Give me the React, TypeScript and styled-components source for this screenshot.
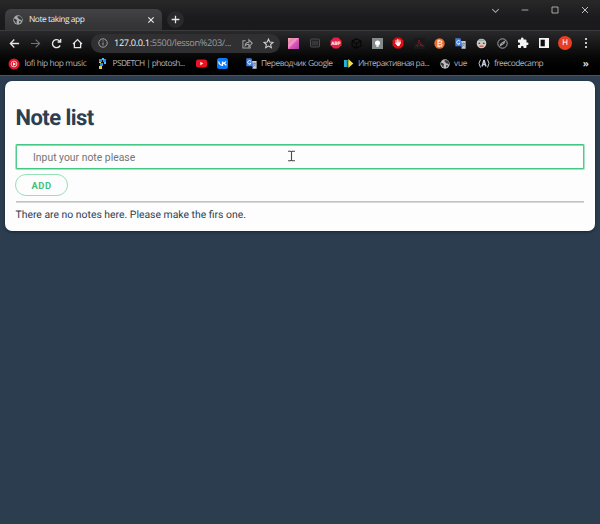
import React from 'react';
import styled, { createGlobalStyle } from 'styled-components';

const Global = createGlobalStyle`
  * { box-sizing: border-box; }
  body { margin: 0; background: #2b3d4f; overflow: hidden; font-family: Roboto, sans-serif; text-rendering: geometricPrecision; }
  svg { display: block; flex: none; }
`;

const Window = styled.div`
  width: 600px;
  height: 524px;
  display: flex;
  flex-direction: column;
  background: #2b3d4f;
`;
const TitleBar = styled.header`
  height: 30px;
  flex: none;
  display: flex;
  align-items: flex-end;
  padding-left: 5px;
  background: linear-gradient(#292829, #1b1a1c 60%, #1a191b);
`;
const Tab = styled.div`
  width: 157px;
  height: 21px;
  display: flex;
  align-items: center;
  padding: 0 7px 0 8px;
  border-radius: 6px 6px 0 0;
  background: linear-gradient(#424244, #323233);
`;
const TabTitle = styled.span`
  flex: 1;
  margin-left: 6px;
  font: 8.4px/12px 'Open Sans', sans-serif;
  color: #ececec;
  letter-spacing: -0.45px;
  white-space: nowrap;
`;
const NewTab = styled.div`
  width: 17px;
  height: 17px;
  margin: 0 0 2px 5px;
  display: grid;
  place-items: center;
  border-radius: 50%;
  background: #29282a;
`;
const WindowButtons = styled.div`
  display: grid;
  grid-template-columns: repeat(4, 30px);
  place-items: center;
  height: 20px;
  margin: 0 0 10px auto;
`;
const Toolbar = styled.div`
  height: 25px;
  flex: none;
  display: flex;
  align-items: center;
  padding-left: 3.5px;
  border-top: 1px solid #3b3a3c;
  background: linear-gradient(#29292b, #090909);
`;
const NavButtons = styled.nav`
  flex: none;
  display: grid;
  grid-template-columns: repeat(4, 21px);
  place-items: center;
  margin-right: 3.5px;
`;
const AddressBar = styled.div`
  flex: none;
  width: 188.5px;
  height: 19px;
  display: flex;
  align-items: center;
  gap: 10px;
  padding: 0 6px 0 7px;
  border-radius: 10px;
  background: #303032;
`;
const Url = styled.span`
  flex: 1;
  min-width: 0;
  margin: -1px 0 0 -4px;
  font: 9.2px/13px 'Open Sans', sans-serif;
  color: #9b9b9d;
  letter-spacing: -0.34px;
  white-space: nowrap;
  b { font-weight: 400; color: #f2f2f2; }
`;
const Actions = styled.div`
  flex: none;
  display: grid;
  grid-template-columns: repeat(15, 20.86px);
  place-items: center;
  margin-left: 4px;
`;
const Avatar = styled.div`
  width: 14px;
  height: 14px;
  border-radius: 50%;
  background: #e8401f;
  color: #fff;
  font: 8px/14px Roboto, sans-serif;
  text-align: center;
`;
const Bookmarks = styled.div`
  height: 20px;
  flex: none;
  display: flex;
  align-items: center;
  padding: 0 11px 3px 8px;
  background: linear-gradient(#080808, #000 60%);
`;
const Bookmark = styled.div<{ $width: number; $tracking?: number }>`
  flex: none;
  width: ${(p) => p.$width}px;
  display: flex;
  align-items: center;
  gap: 4.5px;
  font: 8.4px/12px 'Open Sans', sans-serif;
  letter-spacing: ${(p) => p.$tracking ?? -0.48}px;
  color: #b0b2b8;
  white-space: nowrap;
`;
const More = styled.span`
  margin-left: auto;
  font: 700 10px/10px 'Open Sans', sans-serif;
  padding-bottom: 2px;
  color: #ddd;
`;
const Page = styled.main`
  flex: 1;
  padding: 6px 5px 0;
  box-shadow: inset 0 1px #40566b;
`;
const Card = styled.section`
  height: 150px;
  padding: 24px 11px 0 10px;
  border-radius: 7px;
  background: #fdfdfe;
  color: #2c3e50;
  box-shadow: 0 1px 3px rgba(10, 20, 35, 0.6);
`;
const Heading = styled.h1`
  margin: 0 0 0 0.5px;
  font-size: 22px;
  line-height: 27px;
  font-weight: 700;
  letter-spacing: -0.55px;
`;
const NoteInput = styled.input`
  display: block;
  width: 100%;
  height: 26px;
  margin: 12px 0 4px;
  padding: 0 15px 0 17px;
  width: 570px;
  border: 1px solid #a4e4c3;
  border-top-color: #42c883;
  border-radius: 2px;
  outline: none;
  background: transparent;
  box-shadow: inset 1px 0 #52cb8e, inset -1px 0 #52cb8e, inset 0 -1px #42c883, inset 0 1px #8edcb4;
  font: 10.4px Roboto, sans-serif;
  &::placeholder { color: #757575; opacity: 1; }
`;
const AddButton = styled.button`
  display: block;
  width: 53px;
  height: 22px;
  padding: 0;
  border: 1px solid #96dfb9;
  border-radius: 11px;
  background: transparent;
  color: #42bf80;
  font: 700 9.4px Roboto, sans-serif;
  letter-spacing: 0.5px;
`;
const Divider = styled.hr`
  height: 2px;
  margin: 5px 0 5px 0.5px;
  border: 0;
  border-top: 1px solid #c0c2c3;
  background: #d6d7d8;
`;
const Message = styled.p`
  margin: 0 0 0 0.5px;
  font-size: 10.4px;
  line-height: 13px;
  white-space: nowrap;
`;
const Pointer = styled.svg`
  position: absolute;
  left: 287px;
  top: 150px;
`;

const Line = ({ d, size = 12, color = '#e6e6e6', w = 1.3 }: { d: string; size?: number; color?: string; w?: number }) => (
  <svg width={size} height={size} viewBox="0 0 12 12" fill="none" stroke={color} strokeWidth={w}><path d={d} /></svg>
);
const Globe = ({ size = 10, color = '#bcbec0' }: { size?: number; color?: string }) => (
  <svg width={size} height={size} viewBox="0 0 10 10">
    <circle cx="5" cy="5" r="4.7" fill={color} />
    <path d="M1 3.6l2 .7 1.2 1.1-.7 1.2.4 2.2-1.4-1L1 5.3zM5 1l-.8 1.3 1.2.7.3 1.2 1.7.2 1.5 1.4.2-2.4L7.7 1.6zM6.1 6l1.9.3-.8 1.6-1.1.5z" fill="#38393b" />
  </svg>
);
const Translate = () => (
  <svg width="11" height="11" viewBox="0 0 11 11">
    <path d="M5 3h5.6v7.7H6.5z" fill="#c9ced6" />
    <path d="M.3.3h5.2l2 8H.3z" fill="#3f7fe2" />
    <path d="M5 3.3a1.8 1.8 0 1 0 .1 2H3.6" fill="none" stroke="#fff" strokeWidth=".9" />
    <path d="M6.9 5.4h3.2M8.5 4.5v1M9.7 5.6Q9 7.5 7.4 8.1M7.4 6.3l2.3 2.2" fill="none" stroke="#64788f" strokeWidth=".7" />
    <path d="M5.5 8.3h2l-1 2.4z" fill="#2855ac" />
  </svg>
);

const Extensions = () => (
  <Actions>
    <svg width="11" height="11" viewBox="0 0 11 11">
      <defs><linearGradient id="pink" x1="0" y1="0" x2="1" y2="1"><stop stopColor="#f2b5a9" /><stop offset=".5" stopColor="#e45bb5" /><stop offset="1" stopColor="#a63fac" /></linearGradient></defs>
      <path d="M0 0h11v11H0z" fill="url(#pink)" /><path d="M0 7L7 0h4L0 11z" fill="#f4b1dc" opacity=".55" />
    </svg>
    <svg width="10" height="10" viewBox="0 0 10 10" fill="#242426" stroke="#4b4b4d"><rect x=".5" y="1" width="9" height="8" rx="1" /><path d="M3 3v4M5 3v4M7 3v4" /></svg>
    <svg width="12" height="12" viewBox="0 0 12 12"><path d="M3.7.5h4.6l3.2 3.2v4.6l-3.2 3.2H3.7L.5 8.3V3.7z" fill="#e51f45" /><text x="6" y="7.8" fill="#fff" fontFamily="Roboto" fontWeight="700" fontSize="4.8" textAnchor="middle">ABP</text></svg>
    <Line size={11} color="#050505" w={1.2} d="M6 .8l4.8 2.6v5.2L6 11.2 1.2 8.6V3.4zM1.2 3.4L6 6l4.8-2.6M6 6v5" />
    <svg width="11" height="11" viewBox="0 0 11 11"><path d="M0 0h11v11H0z" fill="#858b8d" /><circle cx="5.5" cy="5" r="2.5" fill="#fff" /><path d="M4.4 7h2.2v2H4.4z" fill="#edf2f2" /></svg>
    <svg width="12" height="12" viewBox="0 0 12 12"><path d="M3.6.5h4.8l3.1 3.1v4.8l-3.1 3.1H3.6L.5 8.4V3.6z" fill="#dc0d14" /><path d="M4 6.7V3.5M5.4 6V2.5M6.8 6V2.8M8.1 6.5V3.8M4 6.5l1.5 2.2h1.6l1-2.6z" fill="#fff" stroke="#fff" strokeWidth=".9" strokeLinecap="round" /></svg>
    <svg width="11" height="11" viewBox="0 0 11 11"><path d="M0 0h11v11H0z" fill="#17191a" /><path d="M1.5 8.7Q5 6 5 2q1 5 4.5 6Q5 6 3 9M6 5.5l3 3" fill="none" stroke="#85191f" strokeWidth=".9" /></svg>
    <svg width="11" height="11" viewBox="0 0 11 11"><circle cx="5.5" cy="5.5" r="5.2" fill="#f06c2b" /><path d="M3.2 3h3.6q1.4 0 1.2 1.3L6.8 5.4Q8.6 6 7.7 8H3.2M4 3v5M3.8 5.4H7M5 1.6V3M5 8v1.3" fill="none" stroke="#fff" strokeWidth="1" /></svg>
    <Translate />
    <svg width="11" height="11" viewBox="0 0 11 11"><circle cx="5.5" cy="5.5" r="4.8" fill="#d4c9bc" /><path d="M1.3 3.2Q5.5-.8 9.7 3.2z" fill="#98a7aa" /><circle cx="3.2" cy="5.3" r="1.3" fill="#394650" stroke="#efefe8" strokeWidth=".7" /><circle cx="7.8" cy="5.3" r="1.3" fill="#394650" stroke="#efefe8" strokeWidth=".7" /><path d="M3.5 8.2h4" stroke="#bd685b" strokeWidth="1.5" /></svg>
    <svg width="11" height="11" viewBox="0 0 11 11" fill="none" stroke="#a4a5a6"><circle cx="5.5" cy="5.5" r="4.7" /><path d="M3.3 7.7l.8-2.2 3.6-2.2-.8 2.2z" strokeWidth="1.1" /></svg>
    <svg width="12" height="12" viewBox="0 0 24 24" fill="#f4f4f4"><path d="M20.5 11H19V7a2 2 0 0 0-2-2h-4V3.5a2.5 2.5 0 0 0-5 0V5H4a2 2 0 0 0-2 2v3.8h1.5a2.7 2.7 0 0 1 0 5.4H2V20a2 2 0 0 0 2 2h3.8v-1.5a2.7 2.7 0 0 1 5.4 0V22H17a2 2 0 0 0 2-2v-4h1.5a2.5 2.5 0 0 0 0-5z" /></svg>
    <svg width="10" height="10" viewBox="0 0 10 10"><path d="M0 0h10v10H0z" fill="#f4f4f4" /><path d="M1.6 1.7h4.2v6.6H1.6z" fill="#0d0d0d" /></svg>
    <Avatar>H</Avatar>
    <svg width="4" height="12" viewBox="0 0 4 12" fill="#eee"><circle cx="2" cy="2" r="1.1" /><circle cx="2" cy="6" r="1.1" /><circle cx="2" cy="10" r="1.1" /></svg>
  </Actions>
);

export default function App() {
  return (
    <Window>
      <Global />
      <TitleBar>
        <Tab>
          <Globe color="#a9abad" />
          <TabTitle>Note taking app</TabTitle>
          <Line size={8} w={1.8} d="M2 2l8 8M10 2L2 10" />
        </Tab>
        <NewTab><Line size={11} w={1.4} d="M6 1.8v8.4M1.8 6h8.4" /></NewTab>
        <WindowButtons>
          <Line size={11} color="#aaa" w={1.1} d="M2.5 4.5L6 8l3.5-3.5" />
          <Line size={8} color="#bbb" d="M1 6h10" />
          <Line size={8} color="#bbb" d="M1.5 1.5h9v9h-9z" />
          <Line size={8} color="#ccc" w={1.4} d="M1.5 1.5l9 9M10.5 1.5l-9 9" />
        </WindowButtons>
      </TitleBar>
      <Toolbar>
        <NavButtons>
          <Line size={11} w={1.4} d="M11 6H2M5.8 1.7L1.5 6l4.3 4.3" />
          <Line size={11} color="#737375" w={1.2} d="M1 6h9M6.2 1.7L10.5 6l-4.3 4.3" />
          <Line size={11} w={1.5} d="M10 8a4.4 4.4 0 1 1-.3-4.3M10.5 1v3.3H7.2" />
          <Line size={11} w={1.4} d="M1.1 6.5L6 1.7l4.9 4.8M2.6 5.5v5h6.8v-5" />
        </NavButtons>
        <AddressBar>
          <svg width="10" height="10" viewBox="0 0 10 10" fill="none" stroke="#a0a0a2"><circle cx="5" cy="5" r="4.2" /><path d="M5 4.4v3M5 2.4v1" /></svg>
          <Url><b>127.0.0.1</b>:5500/lesson%203/...</Url>
          <Line size={11} color="#a6a6a8" w={1.1} d="M4 3H1v8h8V9M3.5 8.3q.3-3.6 4-3.6V2l3.7 3.8-3.7 3.5V6.8Q5 6.6 3.5 8.3z" />
          <Line size={11} color="#d0d0d0" w={1.2} d="M6 1.2l1.4 3.2 3.5.4-2.6 2.3.8 3.5L6 8.8l-3.1 1.8.8-3.5L1.1 4.8l3.5-.4z" />
        </AddressBar>
        <Extensions />
      </Toolbar>
      <Bookmarks>
        <Bookmark $width={90} $tracking={-0.42}>
          <svg width="12" height="12" viewBox="0 0 12 12"><circle cx="6" cy="6" r="5.5" fill="#e2152d" /><circle cx="6" cy="6" r="2.9" fill="none" stroke="#fff" strokeWidth=".7" /><path d="M5 4.2L8 6 5 7.8z" fill="#fff" /></svg>
          lofi hip hop music
        </Bookmark>
        <Bookmark $width={98} $tracking={-0.62}>
          <svg width="10" height="11" viewBox="0 0 10 11"><path d="M1 1h3v3H1zM5 1h3v3H5zM2 5h3v3H2z" fill="#268ff1" /><path d="M4 0h2v2H4zM6 4h2v2H6z" fill="#4bbefa" /><path d="M1 4h2v1H1zM1 8h3v3H1z" fill="#e1d34a" /></svg>
          PSDETCH | photosh...
        </Bookmark>
        <Bookmark $width={21}><svg width="11" height="9" viewBox="0 0 11 9"><rect y=".5" width="11" height="8" rx="2" fill="#ed1122" /><path d="M4.3 2.7v3.6l3-1.8z" fill="#fff" /></svg></Bookmark>
        <Bookmark $width={28.5}><svg width="11" height="11" viewBox="0 0 11 11"><rect width="11" height="11" rx="2.5" fill="#0b7bfb" /><path d="M1.7 3.5q.7 3.8 3.8 3.8V3.5M9 3.5Q8 5 5.5 5.2 8 5.5 9.3 7.4" fill="none" stroke="#fff" strokeWidth="1.3" /></svg></Bookmark>
        <Bookmark $width={97}><Translate />Переводчик Google</Bookmark>
        <Bookmark $width={97} $tracking={-0.55}>
          <svg width="11" height="9" viewBox="0 0 11 9"><path d="M1 1h4v7H1z" fill="#27b3df" /><path d="M3.8.5L7.5 4.5 3.8 8.5z" fill="#285e3e" /><path d="M5.3 0L10.3 4.5 5.3 9z" fill="#f4df32" /></svg>
          Интерактивная ра...
        </Bookmark>
        <Bookmark $width={38} $tracking={-0.3}><Globe />vue</Bookmark>
        <Bookmark $width={70} $tracking={-0.58}>
          <svg width="12" height="11" viewBox="0 0 12 11" fill="none" stroke="#c4cad4"><path d="M2.5 1.5q-3 4 0 8M9.5 1.5q3 4 0 8" /><path d="M6 2L4 8.5M6 2l2 6.5M4.8 6.5h2.4" strokeWidth="1.4" /></svg>
          freecodecamp
        </Bookmark>
        <More>»</More>
      </Bookmarks>
      <Page>
        <Card>
          <Heading>Note list</Heading>
          <NoteInput placeholder="Input your note please" />
          <AddButton>ADD</AddButton>
          <Divider />
          <Message>There are no notes here. Please make the firs one.</Message>
        </Card>
      </Page>
      <Pointer width="9" height="12" viewBox="0 0 9 12" fill="none" stroke="#48494b" strokeWidth="1.1"><path d="M1 1.2h2.5l1 .5 1-.5H8M4.5 1.5v9M1 10.8h2.5l1-.5 1 .5H8" /></Pointer>
    </Window>
  );
}
